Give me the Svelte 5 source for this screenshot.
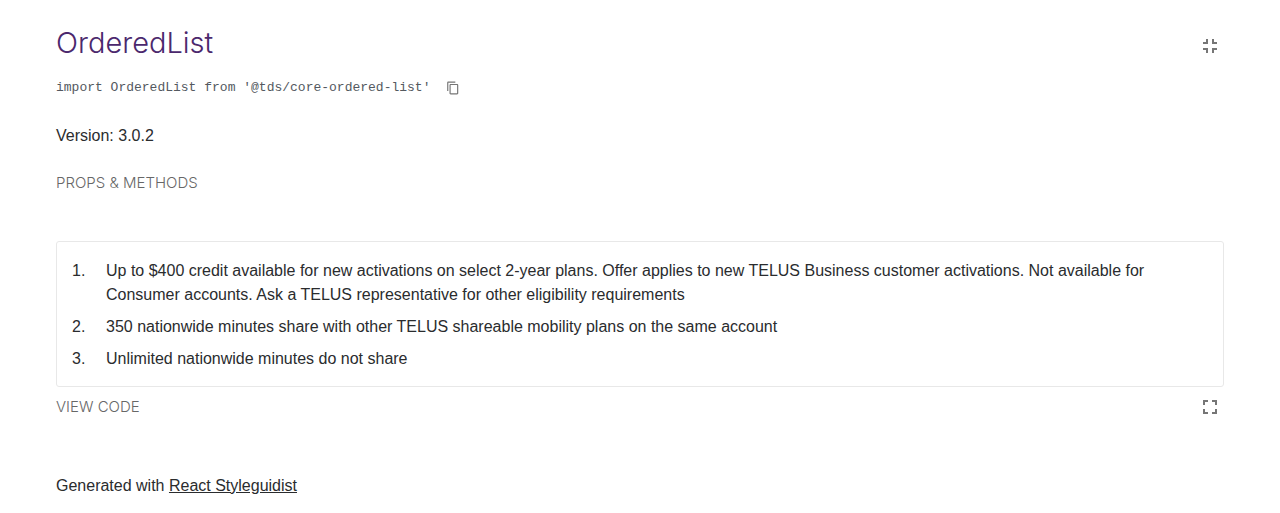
<script>
  const items = [
    'Up to $400 credit available for new activations on select 2-year plans. Offer applies to new TELUS Business customer activations. Not available for Consumer accounts. Ask a TELUS representative for other eligibility requirements',
    '350 nationwide minutes share with other TELUS shareable mobility plans on the same account',
    'Unlimited nationwide minutes do not share'
  ];
</script>

<main>
  <header>
    <h1><a href="#orderedlist">OrderedList</a></h1>
    <button class="icon" aria-label="Exit isolated component">
      <svg width="24" height="24" viewBox="0 0 24 24"><path d="M5 16h3v3h2v-5H5v2zm3-8H5v2h5V5H8v3zm6 11h2v-3h3v-2h-5v5zm2-11V5h-2v5h5V8h-3z" /></svg>
    </button>
  </header>
  <div class="import">
    <code>import OrderedList from '@tds/core-ordered-list'</code>
    <button class="copy" aria-label="Copy to clipboard">
      <svg width="14" height="14" viewBox="0 0 24 24"><path d="M16 1H4c-1.100 0-2 .9-2 2v14h2V3h12V1zm3 4H8c-1.100 0-2 .9-2 2v14c0 1.100.9 2 2 2h11c1.100 0 2-.9 2-2V7c0-1.100-.9-2-2-2zm0 16H8V7h11v14z" /></svg>
    </button>
  </div>
  <p>Version: 3.0.2</p>
  <button class="tab">Props &amp; methods</button>

  <section>
    <ol>
      {#each items as item}
        <li>{item}</li>
      {/each}
    </ol>
  </section>
  <div class="toolbar">
    <button class="tab">View code</button>
    <button class="icon" aria-label="Open isolated">
      <svg width="24" height="24" viewBox="0 0 24 24"><path d="M7 14H5v5h5v-2H7v-3zm-2-4h2V7h3V5H5v5zm12 7h-3v2h5v-5h-2v3zM14 5v2h3v3h2V5h-5z" /></svg>
    </button>
  </div>
  <footer>Generated with <a href="#styleguidist">React Styleguidist</a></footer>
</main>

<style>
  :global(body) { margin: 0; background: #fff; }
  main {
    padding: 23px 56px 15px;
    color: #2a2c2e;
    font: 300 16px/24px "Liberation Sans", Arial, sans-serif;
  }
  header, .toolbar { display: flex; align-items: center; justify-content: space-between; }
  h1 { margin: 0; font: 300 29px/40px Inter, sans-serif; }
  h1 a { color: #4b286d; text-decoration: none; }
  button { border: 0; padding: 0; background: none; color: #767676; font: inherit; cursor: pointer; }
  svg { display: block; fill: currentColor; }
  .icon { padding: 0 2px; }
  header .icon { margin-top: 6px; }
  .import { display: flex; align-items: center; gap: 16px; margin-top: 13px; }
  code { color: #54595f; font: 13px/24px "Liberation Mono", monospace; }
  p { margin: 24px 0 23px; }
  .tab { display: block; color: #676767; font: 300 15px/24px Inter, sans-serif; text-transform: uppercase; }
  section { margin-top: 46px; padding: 17px 15px 15px; border: 1px solid #e8e8e8; border-radius: 3px; }
  ol { margin: 0; padding: 0; list-style: none; counter-reset: item; }
  li { display: grid; grid-template-columns: 34px 1fr; counter-increment: item; }
  li::before { content: counter(item) "."; }
  li + li { margin-top: 8px; }
  .toolbar { margin-top: 8px; }
  footer { margin-top: 55px; }
  footer a { color: inherit; text-decoration: underline; }
</style>
